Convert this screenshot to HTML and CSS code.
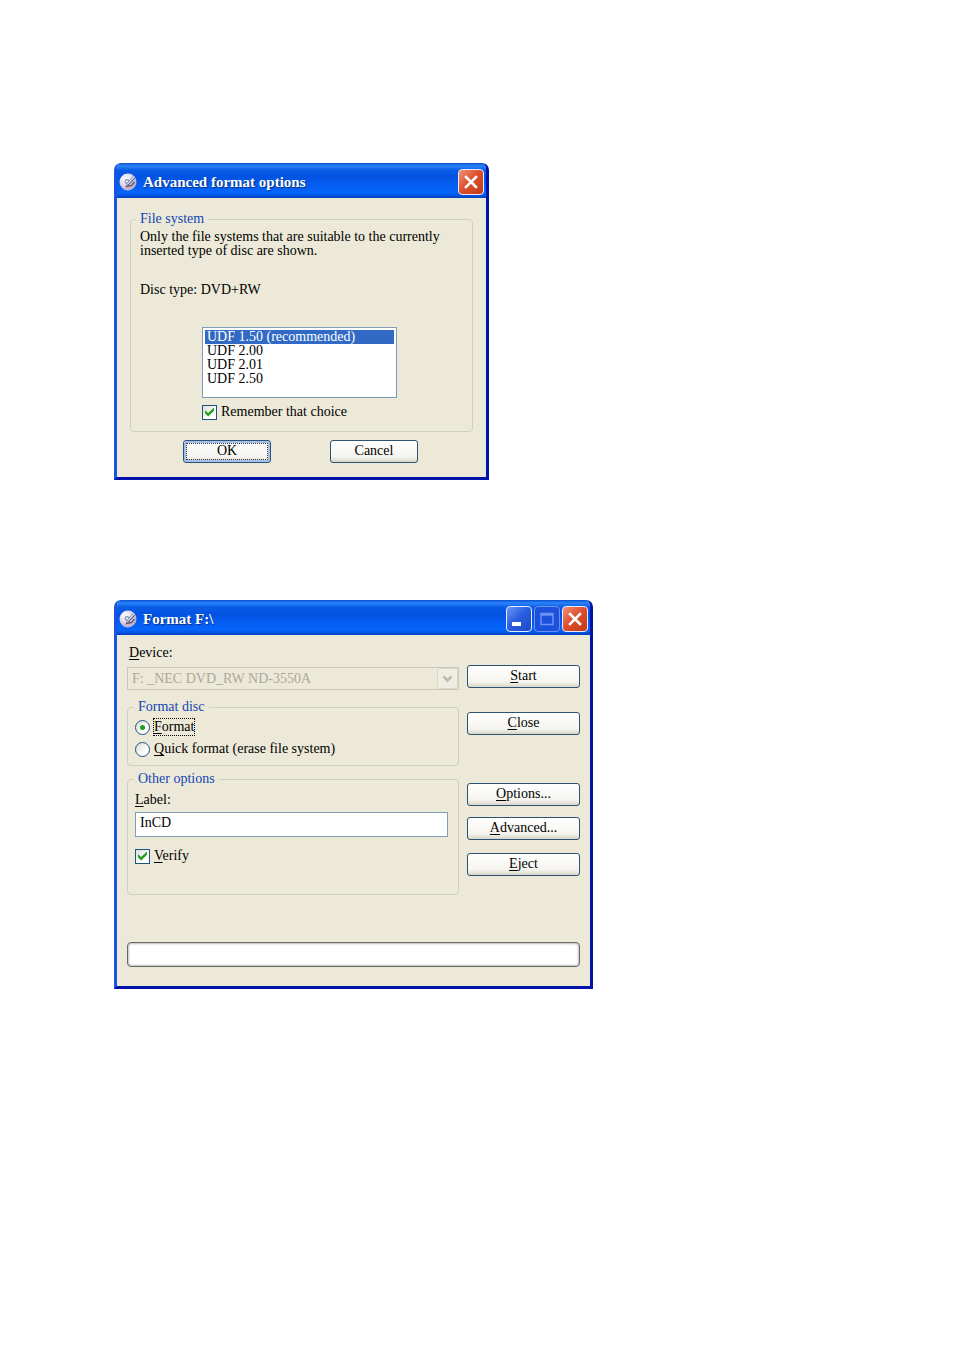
FILE: index.html
```html
<!DOCTYPE html>
<html lang="en">
<head>
<meta charset="utf-8">
<title>Format F:\</title>
<link rel="stylesheet" href="styles.css">
</head>
<body>
<svg class="symbols" aria-hidden="true">
  <defs>
    <radialGradient id="disc-fill" cx="35%" cy="30%" r="80%">
      <stop offset="0" stop-color="#ffffff"/>
      <stop offset="0.5" stop-color="#dcd6ea"/>
      <stop offset="1" stop-color="#a3a0c4"/>
    </radialGradient>
    <symbol id="disc" viewBox="0 0 18 18">
      <circle cx="9" cy="9" r="8.500" fill="url(#disc-fill)"/>
      <path d="M9 9 2 5a8 8 0 0 1 4-3.500Z" fill="#f6eefa"/>
      <path d="M9 9 4 16a8 8 0 0 0 6 1Z" fill="#c9b3d3"/>
      <circle cx="8" cy="8.500" r="2.400" fill="#8f95c4"/>
      <circle cx="8" cy="8.500" r="1.100" fill="#fff"/>
      <path d="m8.500 11.500 6.500-7" fill="none" stroke="#555c8c" stroke-width="3"/>
      <path d="m8.500 11 6.500-7" fill="none" stroke="#dfe2f2" stroke-width="1.400"/>
      <path d="m7 13.500 5.500-1 3-3.500" fill="none" stroke="#6a5666" stroke-width="1.400"/>
    </symbol>
    <symbol id="cross" viewBox="0 0 24 24">
      <path d="m7 7 10 10M17 7 7 17" fill="none" stroke="#fff" stroke-width="2.600" stroke-linecap="square"/>
    </symbol>
  </defs>
</svg>
<main class="page">
  <section class="window window-advanced" aria-labelledby="advanced-title">
    <header class="titlebar">
      <svg class="app-icon" aria-hidden="true"><use href="#disc"/></svg>
      <h2 class="title" id="advanced-title">Advanced format options</h2>
      <button class="caption caption-close" type="button" aria-label="Close"><svg><use href="#cross"/></svg></button>
    </header>
    <form class="advanced-body">
      <fieldset class="group">
        <legend>File system</legend>
        <p class="hint">Only the file systems that are suitable to the currently inserted type of disc are shown.</p>
        <p class="disc-type">Disc type: DVD+RW</p>
        <div class="choice">
          <select class="list" size="4" aria-label="File system">
            <option selected>UDF 1.50 (recommended)</option>
            <option>UDF 2.00</option>
            <option>UDF 2.01</option>
            <option>UDF 2.50</option>
          </select>
          <label class="option"><input class="check" type="checkbox" checked><span>Remember that choice</span></label>
        </div>
      </fieldset>
      <div class="actions">
        <button class="button button-default" type="button">OK</button>
        <button class="button" type="button">Cancel</button>
      </div>
    </form>
  </section>

  <section class="window window-format" aria-labelledby="format-title">
    <header class="titlebar">
      <svg class="app-icon" aria-hidden="true"><use href="#disc"/></svg>
      <h2 class="title" id="format-title">Format F:\</h2>
      <button class="caption" type="button" aria-label="Minimize"><svg viewBox="0 0 24 24"><path d="M5 15h9v4H5z" fill="#fff"/></svg></button>
      <button class="caption caption-off" type="button" aria-label="Maximize" disabled><svg viewBox="0 0 24 24"><path d="M6 6.500h12v11H6zM6 8h12" fill="none" stroke="#6c92f0" stroke-width="1.500"/></svg></button>
      <button class="caption caption-close" type="button" aria-label="Close"><svg><use href="#cross"/></svg></button>
    </header>
    <form class="format-body">
      <div class="settings">
        <label class="device-label" for="device"><u>D</u>evice:</label>
        <select class="device" id="device" disabled>
          <option>F: _NEC DVD_RW ND-3550A</option>
        </select>
        <fieldset class="group group-format">
          <legend>Format disc</legend>
          <label class="option"><input class="radio" type="radio" name="mode" checked><span class="focused"><u>F</u>ormat</span></label>
          <label class="option"><input class="radio" type="radio" name="mode"><span><u>Q</u>uick format (erase file system)</span></label>
        </fieldset>
        <fieldset class="group group-other">
          <legend>Other options</legend>
          <label class="volume-label" for="volume"><u>L</u>abel:</label>
          <input class="text" id="volume" type="text" value="InCD">
          <label class="option"><input class="check" type="checkbox" checked><span><u>V</u>erify</span></label>
        </fieldset>
      </div>
      <div class="commands">
        <button class="button" type="button"><u>S</u>tart</button>
        <button class="button button-close" type="button"><u>C</u>lose</button>
        <button class="button button-options" type="button"><u>O</u>ptions...</button>
        <button class="button button-advanced" type="button"><u>A</u>dvanced...</button>
        <button class="button button-eject" type="button"><u>E</u>ject</button>
      </div>
      <div class="progress" role="progressbar" aria-label="Format progress" aria-valuenow="0" aria-valuemin="0" aria-valuemax="100"></div>
    </form>
  </section>
</main>
</body>
</html>
```

FILE: styles.css
```css
*,
*::before {
  box-sizing: border-box;
}

body {
  margin: 0;
  background: #fff;
  color: #000;
  font: 14px/16px "Liberation Serif", "Times New Roman", serif;
}

button,
input,
select {
  margin: 0;
  font: inherit;
  color: inherit;
}

u {
  text-underline-offset: 2px;
}

.symbols {
  position: absolute;
  width: 0;
  height: 0;
}

.page {
  display: flex;
  flex-direction: column;
  gap: 120px;
  padding: 163px 20px 40px 114px;
}

/* Windows */

.window {
  width: 100%;
  border: solid #0a1fb4;
  border-width: 0 3px 3px;
  border-color: #0831d9 #0013a8 #0013a8 #1a55e0;
  border-radius: 7px 7px 0 0;
  background: #ece9d8;
  overflow: hidden;
}

.window-advanced {
  max-width: 375px;
}

.window-format {
  max-width: 479px;
}

.titlebar {
  display: flex;
  align-items: center;
  gap: 2px;
  height: 35px;
  margin: 0 -3px;
  padding: 2px 5px 0 5px;
  background: linear-gradient(#0a4fd0 0, #2a84fa 3px, #0a5ce6 7px, #0353e2 14px, #0560f5 25px, #0665fc 30px, #0450d8 33px, #0340bf 35px);
}

.app-icon {
  width: 18px;
  height: 18px;
}

.title {
  flex: 1;
  margin: 0 0 0 4px;
  color: #fff;
  font-size: 15px;
  line-height: 18px;
  text-shadow: 1px 1px 1px #0a2f88;
}

.caption {
  width: 26px;
  height: 26px;
  padding: 0;
  border: 1px solid #e4ecff;
  border-radius: 4px;
  background: linear-gradient(135deg, #6d97f4, #2a5fe0 45%, #1c4cc8);
}

.caption svg {
  display: block;
  width: 24px;
  height: 24px;
}

.caption-off {
  border-color: #6c92f0;
  background: #1d50dc;
}

.caption-close {
  background: linear-gradient(135deg, #ef9579, #de5030 45%, #c23a16);
}

/* Controls */

.group {
  min-width: 0;
  margin: 0;
  padding: 0 9px;
  border: 1px solid #d0d0bf;
  border-radius: 4px;
}

.group legend {
  margin-left: -4px;
  padding: 0 4px;
  color: #1346b5;
}

.option {
  display: flex;
  align-items: center;
  gap: 4px;
  height: 16px;
}

.check,
.radio {
  display: grid;
  place-items: center;
  flex: none;
  width: 15px;
  height: 15px;
  appearance: none;
  border: 1px solid #1d5281;
  background: linear-gradient(135deg, #dcdcd7, #fff 70%);
}

.radio {
  border-radius: 50%;
}

.check:checked::before {
  content: "";
  width: 9px;
  height: 9px;
  background: #21a121;
  clip-path: polygon(0 30%, 35% 62%, 100% 0, 100% 35%, 35% 100%, 0 65%);
}

.radio:checked::before {
  content: "";
  width: 5px;
  height: 5px;
  border-radius: 50%;
  background: #21a121;
}

.focused {
  outline: 1px dotted #000;
}

.button {
  height: 23px;
  padding: 0 4px 2px;
  border: 1px solid #2c5372;
  border-radius: 3px;
  background: linear-gradient(#fff, #f5f4ef 75%, #d9d5c8);
}

.button-default {
  box-shadow: inset 0 0 0 2px #a5c0ec;
  outline: 1px dotted #333;
  outline-offset: -4px;
}

/* Advanced format options */

.advanced-body {
  padding: 13px 13px 14px;
}

.advanced-body .group {
  padding-bottom: 11px;
}

.hint,
.disc-type {
  margin: 3px 0 0;
  line-height: 14px;
}

.hint {
  max-width: 310px;
}

.disc-type {
  margin-top: 25px;
}

.choice {
  width: 195px;
  max-width: 100%;
  margin: 30px auto 0 62px;
}

.list {
  display: block;
  width: 100%;
  height: 71px;
  margin-bottom: 6px;
  padding: 2px;
  border: 1px solid #7f9db9;
  border-radius: 0;
  background: #fff;
  overflow: hidden;
}

.list option {
  display: flex;
  align-items: center;
  height: 14px;
  min-height: 14px;
  padding: 0 2px;
}

.list option:checked {
  background: #316ac5 linear-gradient(#316ac5, #316ac5);
  color: #fff;
}

.actions {
  display: flex;
  justify-content: center;
  gap: 59px;
  margin-top: 8px;
  padding-right: 2px;
}

.actions .button {
  width: 88px;
}

/* Format */

.format-body {
  display: grid;
  grid-template-columns: minmax(0, 1fr) 113px;
  column-gap: 8px;
  padding: 10px 10px 19px;
}

.settings {
  display: flex;
  flex-direction: column;
}

.device-label {
  margin-left: 2px;
}

.device {
  width: 100%;
  height: 23px;
  margin-top: 6px;
  padding: 0 24px 0 4px;
  appearance: none;
  border: 1px solid #c9c7ba;
  border-radius: 0;
  background:
    url("data:image/svg+xml,%3Csvg xmlns='http://www.w3.org/2000/svg' width='21' height='21'%3E%3Crect x='.5' y='.5' width='20' height='20' rx='2' fill='%23efede2' stroke='%23dad7c9'/%3E%3Cpath d='m6.500 8.500 4 4 4-4' fill='none' stroke='%23bcb9a9' stroke-width='2.500'/%3E%3C/svg%3E") right center no-repeat,
    #ece9d8;
  color: #aca899;
  opacity: 1;
}

.group-format {
  margin-top: 9px;
  padding: 0 7px 8px;
}

.group-format .option {
  margin-top: 4px;
}

.group-format .option + .option {
  margin-top: 6px;
}

.group-other {
  margin-top: 5px;
  padding: 0 10px 30px 7px;
}

.group-format legend,
.group-other legend {
  margin-left: -1px;
}

.volume-label {
  display: block;
  margin-top: 5px;
}

.text {
  display: block;
  width: 100%;
  height: 25px;
  margin: 4px 0 11px;
  padding: 0 4px 4px;
  border: 1px solid #7f9db9;
  background: #fff;
}

.commands {
  display: flex;
  flex-direction: column;
  padding-top: 20px;
}

.button-close {
  margin-top: 24px;
}

.button-options {
  margin-top: 48px;
}

.button-advanced {
  margin-top: 11px;
}

.button-eject {
  margin-top: 13px;
}

.progress {
  grid-column: 1 / -1;
  height: 25px;
  margin-top: 47px;
  border: 1px solid #686868;
  border-radius: 4px;
  background: #fff;
  box-shadow: inset 0 0 2px 1px #bebebe;
}
```
